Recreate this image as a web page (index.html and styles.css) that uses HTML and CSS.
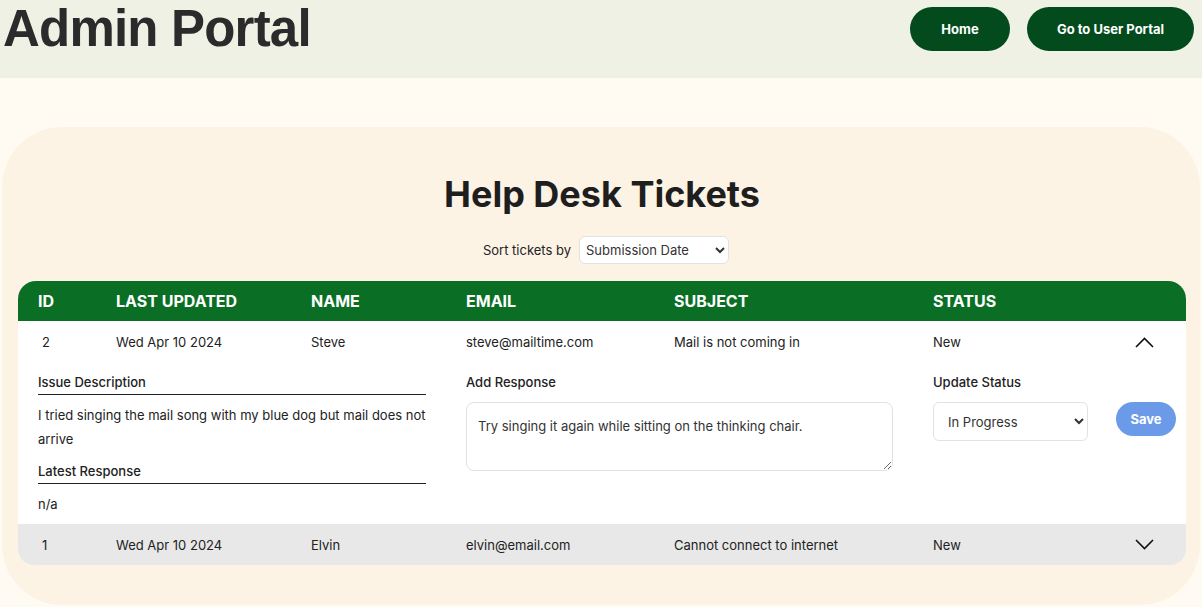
FILE: index.html
```html
<!DOCTYPE html>
<html lang="en">
<head>
<meta charset="utf-8">
<title>Admin Portal</title>
<link rel="stylesheet" href="styles.css">
</head>
<body>
<header class="topbar">
  <h1 class="brand">Admin Portal</h1>
  <nav class="nav">
    <button class="nav-btn home">Home</button>
    <button class="nav-btn user">Go to User Portal</button>
  </nav>
</header>
<main class="main">
  <section class="card">
    <h2 class="title">Help Desk Tickets</h2>
    <div class="sort">
      <label class="sort-label" for="sort">Sort tickets by</label>
      <select id="sort" class="sort-select">
        <option>Submission Date</option>
      </select>
    </div>
    <div class="table">
      <div class="thead row-grid">
        <div>ID</div>
        <div>Last Updated</div>
        <div>Name</div>
        <div>Email</div>
        <div>Subject</div>
        <div>Status</div>
        <div></div>
      </div>
      <div class="ticket open">
        <div class="row-grid trow">
          <div class="id">2</div>
          <div>Wed Apr 10 2024</div>
          <div>Steve</div>
          <div>steve@mailtime.com</div>
          <div>Mail is not coming in</div>
          <div>New</div>
          <div class="chev"><svg width="19" height="11" viewBox="0 0 19 11"><path d="M1 10 L9.5 1.5 L18 10" fill="none" stroke="#111" stroke-width="1.6"/></svg></div>
        </div>
        <div class="detail">
          <div class="info">
            <div class="info-label">Issue Description</div>
            <p class="info-text">I tried singing the mail song with my blue dog but mail does not arrive</p>
            <div class="info-label">Latest Response</div>
            <p class="info-text">n/a</p>
          </div>
          <div class="respond">
            <div class="field-label">Add Response</div>
            <textarea class="response">Try singing it again while sitting on the thinking chair.</textarea>
          </div>
          <div class="status">
            <div class="field-label">Update Status</div>
            <div class="status-row">
              <select class="status-select"><option>In Progress</option></select>
              <button class="save">Save</button>
            </div>
          </div>
        </div>
      </div>
      <div class="ticket closed">
        <div class="row-grid trow">
          <div class="id">1</div>
          <div>Wed Apr 10 2024</div>
          <div>Elvin</div>
          <div>elvin@email.com</div>
          <div>Cannot connect to internet</div>
          <div>New</div>
          <div class="chev"><svg width="19" height="11" viewBox="0 0 19 11"><path d="M1 1 L9.5 9.5 L18 1" fill="none" stroke="#111" stroke-width="1.6"/></svg></div>
        </div>
      </div>
    </div>
  </section>
</main>
</body>
</html>
```
FILE: styles.css
```css
* { box-sizing: border-box; }
html, body { margin: 0; padding: 0; }
body {
  font-family: Inter, "Noto Sans", sans-serif;
  background: #fffbf3;
  color: #222;
}
.topbar {
  background: #eff1e5;
  height: 78px;
  display: flex;
  justify-content: space-between;
  align-items: flex-start;
}
.brand {
  margin: 0 0 0 3px;
  font-family: "Liberation Sans", Arial, sans-serif;
  font-weight: 700;
  font-size: 51px;
  letter-spacing: -0.8px;
  line-height: 58px;
  color: #2b2b2b;
}
.nav {
  display: flex;
  gap: 17px;
  margin: 7px 8px 0 0;
}
.nav-btn {
  height: 44px;
  border: none;
  border-radius: 22px;
  background: #034b1d;
  color: #fff;
  font-family: Inter, sans-serif;
  font-weight: 700;
  font-size: 13px;
  cursor: pointer;
}
.nav-btn.home { width: 100px; }
.nav-btn.user { width: 167px; }
.main {
  padding: 49px 2px 0 2px;
}
.card {
  background: #fdf3e5;
  border-radius: 60px;
  padding: 43px 14px 40px 16px;
}
.title {
  margin: 0;
  text-align: center;
  font-size: 36px;
  font-weight: 700;
  color: #1e1e1e;
  line-height: 48px;
}
.sort {
  display: flex;
  justify-content: center;
  align-items: center;
  gap: 8px;
  margin-top: 18px;
  margin-left: 8px;
}
.sort-label { font-size: 13px; color: #222; }
.sort-select {
  width: 150px;
  height: 28px;
  font-family: Inter, sans-serif;
  font-size: 13px;
  color: #333;
  background: #fff;
  border: 1px solid #e2e2e2;
  border-radius: 6px;
  padding: 0 2px;
}
.table {
  margin-top: 17px;
}
.row-grid {
  display: grid;
  grid-template-columns: 78px 195px 155px 208px 259px 1fr 19px;
  align-items: center;
  padding: 0 32px 0 20px;
}
.thead {
  background: #0a6f25;
  color: #fff;
  height: 40px;
  border-radius: 18px 18px 0 0;
  font-weight: 700;
  font-size: 16px;
  text-transform: uppercase;
}
.trow {
  height: 42px;
  font-size: 13px;
  color: #222;
}
.trow .id { padding-left: 4px; }
.chev { display: flex; align-items: center; }
.ticket.open { background: #fff; }
.ticket.closed {
  background: #e8e8e8;
  border-radius: 0 0 16px 16px;
}
.ticket.closed .trow { height: 41px; }
.detail {
  display: grid;
  grid-template-columns: 428px 467px 1fr;
  padding: 10px 10px 8px 20px;
  font-size: 13px;
}
.info { width: 388px; }
.info-label, .field-label {
  font-weight: 500;
  font-size: 13px;
  line-height: 18px;
  color: #222;
}
.info-label {
  padding-bottom: 3px;
  border-bottom: 1px solid #222;
}
.info-text {
  margin: 8px 0 11px;
  line-height: 24px;
}
.info-text:last-child { margin-bottom: 0; }
.response {
  display: block;
  margin-top: 11px;
  width: 427px;
  height: 69px;
  border: 1px solid #e2e2e2;
  border-radius: 8px;
  padding: 14px 11px;
  font-family: Inter, sans-serif;
  font-size: 13px;
  line-height: 18px;
  color: #333;
  resize: vertical;
  background: #fff;
}
.status-row {
  display: flex;
  align-items: flex-start;
  gap: 28px;
  margin-top: 11px;
}
.status-select {
  width: 155px;
  height: 39px;
  font-family: Inter, sans-serif;
  font-size: 13px;
  color: #333;
  background: #fff;
  border: 1px solid #e2e2e2;
  border-radius: 6px;
  padding: 0 10px;
}
.save {
  width: 60px;
  height: 34px;
  border: none;
  border-radius: 17px;
  background: #6b9be8;
  color: #fff;
  font-family: Inter, sans-serif;
  font-weight: 700;
  font-size: 13px;
}
```
